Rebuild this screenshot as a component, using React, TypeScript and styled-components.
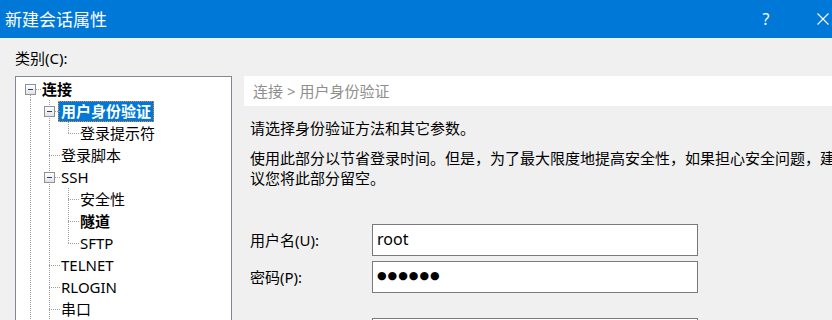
import React from 'react';
import styled, { createGlobalStyle } from 'styled-components';

const GlobalStyle = createGlobalStyle`
  html, body {
    margin: 0;
    padding: 0;
    background: #f0f0f0;
    overflow: hidden;
  }
  body {
    font-family: "Noto Sans", "Noto Sans CJK SC", sans-serif;
    color: #000;
  }
`;

type TreeNode = {
  label: string;
  level: number;
  guides: boolean[];
  first?: boolean;
  last?: boolean;
  expandable?: boolean;
  bold?: boolean;
  selected?: boolean;
};

const nodes: TreeNode[] = [
  { label: '连接', level: 0, guides: [], first: true, expandable: true, bold: true },
  { label: '用户身份验证', level: 1, guides: [true], expandable: true, bold: true, selected: true },
  { label: '登录提示符', level: 2, guides: [true, true], last: true },
  { label: '登录脚本', level: 1, guides: [true] },
  { label: 'SSH', level: 1, guides: [true], expandable: true },
  { label: '安全性', level: 2, guides: [true, true] },
  { label: '隧道', level: 2, guides: [true, true], bold: true },
  { label: 'SFTP', level: 2, guides: [true, true], last: true },
  { label: 'TELNET', level: 1, guides: [true] },
  { label: 'RLOGIN', level: 1, guides: [true] },
  { label: '串口', level: 1, guides: [true] },
];

const App = () => {
  return (
    <Window>
      <GlobalStyle />
      <TitleBar>
        <Title>新建会话属性</Title>
        <TitleButton $help>?</TitleButton>
        <TitleButton>
          <svg width="12" height="12" viewBox="0 0 12 12">
            <path d="M0.5 0.5 L11.5 11.5 M11.5 0.5 L0.5 11.5" stroke="#fff" strokeWidth="1.1" fill="none" />
          </svg>
        </TitleButton>
      </TitleBar>

      <Body>
        <CategoryLabel>类别(C):</CategoryLabel>
        <Content>
          <Tree>
            {nodes.map((node) => (
              <TreeRow key={node.label}>
                {node.guides.map((on, i) => (
                  <Cell key={i}>{on && <VLine $top $bottom />}</Cell>
                ))}
                <Cell>
                  <VLine $top={!node.first} $bottom={!node.last} />
                  <HLine />
                  {node.expandable && (
                    <Expander>
                      <Minus />
                    </Expander>
                  )}
                </Cell>
                <Label $bold={!!node.bold} $selected={!!node.selected}>
                  {node.label}
                </Label>
              </TreeRow>
            ))}
          </Tree>

          <Panel>
            <Breadcrumb>连接 &gt; 用户身份验证</Breadcrumb>
            <PanelBody>
              <Intro>请选择身份验证方法和其它参数。</Intro>
              <Note>
                使用此部分以节省登录时间。但是，为了最大限度地提高安全性，如果担心安全问题，建议您将此部分留空。
              </Note>
              <Form>
                <FieldLabel>用户名(U):</FieldLabel>
                <Field>root</Field>
                <FieldLabel>密码(P):</FieldLabel>
                <Field $password>●●●●●●</Field>
                <FieldLabel />
                <Field $spaced />
              </Form>
            </PanelBody>
          </Panel>
        </Content>
      </Body>
    </Window>
  );
};

const Window = styled.div`
  width: 846px;
  height: 320px;
  overflow: hidden;
  display: flex;
  flex-direction: column;
`;

const TitleBar = styled.div`
  height: 38px;
  flex: 0 0 38px;
  background: #0078d7;
  display: flex;
  align-items: center;
  padding-left: 5px;
  color: #fff;
`;

const Title = styled.div`
  flex: 1;
  font-family: "Noto Sans CJK SC", sans-serif;
  font-size: 17px;
  line-height: 20px;
`;

const TitleButton = styled.div<{ $help?: boolean }>`
  width: 46px;
  height: 38px;
  display: flex;
  align-items: center;
  justify-content: center;
  margin-right: ${(p) => (p.$help ? '11px' : '0')};
  font-family: "Noto Sans", sans-serif;
  font-size: 16px;
`;

const Body = styled.div`
  flex: 1;
  padding: 10px 0 0 15px;
`;

const CategoryLabel = styled.div`
  font-size: 15px;
  line-height: 20px;
`;

const Content = styled.div`
  display: flex;
  gap: 12px;
  margin-top: 8px;
`;

const Tree = styled.div`
  width: 217px;
  height: 300px;
  flex: 0 0 217px;
  background: #fff;
  border: 1px solid #828790;
  padding: 1px 0 0 5px;
  box-sizing: border-box;
  overflow: hidden;
`;

const TreeRow = styled.div`
  display: flex;
  align-items: center;
  height: 22px;
`;

const Cell = styled.span`
  position: relative;
  flex: 0 0 19px;
  height: 22px;
`;

const VLine = styled.span<{ $top: boolean; $bottom: boolean }>`
  position: absolute;
  left: 9px;
  width: 1px;
  top: ${(p) => (p.$top ? '0' : '11px')};
  bottom: ${(p) => (p.$bottom ? '0' : '11px')};
  background-image: linear-gradient(to bottom, #a0a0a0 50%, transparent 50%);
  background-size: 1px 2px;
`;

const HLine = styled.span`
  position: absolute;
  left: 9px;
  right: -1px;
  top: 11px;
  height: 1px;
  background-image: linear-gradient(to right, #a0a0a0 50%, transparent 50%);
  background-size: 2px 1px;
`;

const Expander = styled.span`
  position: absolute;
  left: 4px;
  top: 6px;
  width: 11px;
  height: 11px;
  box-sizing: border-box;
  border: 1px solid #919191;
  background: linear-gradient(to bottom, #ffffff, #e3e3e3);
  display: flex;
  align-items: center;
  justify-content: center;
`;

const Minus = styled.span`
  width: 5px;
  height: 1px;
  background: #1e3f8a;
`;

const Label = styled.span<{ $bold: boolean; $selected: boolean }>`
  margin-left: -1px;
  font-size: 15px;
  line-height: 19px;
  padding: 0 2px;
  white-space: nowrap;
  font-weight: ${(p) => (p.$bold ? 700 : 400)};
  color: ${(p) => (p.$selected ? '#fff' : '#000')};
  background: ${(p) => (p.$selected ? '#0078d7' : 'transparent')};
  border: 1px ${(p) => (p.$selected ? 'dotted #ff8728' : 'solid transparent')};
`;

const Panel = styled.div`
  flex: 1;
  display: flex;
  flex-direction: column;
`;

const Breadcrumb = styled.div`
  height: 30px;
  background: #fff;
  padding-left: 9px;
  font-size: 15px;
  line-height: 30px;
  color: #8e8e8e;
`;

const PanelBody = styled.div`
  padding: 12px 0 0 6px;
  font-size: 15px;
  line-height: 20px;
`;

const Intro = styled.div``;

const Note = styled.div`
  margin-top: 10px;
  width: 590px;
  font-family: "Noto Sans CJK SC", sans-serif;
`;

const Form = styled.div`
  margin-top: 36px;
  display: grid;
  grid-template-columns: 122px 326px;
  row-gap: 5px;
  align-items: center;
`;

const FieldLabel = styled.div`
  font-size: 15px;
  line-height: 20px;
`;

const Field = styled.div<{ $password?: boolean; $spaced?: boolean }>`
  height: 32px;
  box-sizing: border-box;
  border: 1px solid #7a7a7a;
  background: #fff;
  padding-left: 4px;
  margin-top: ${(p) => (p.$spaced ? '20px' : '0')};
  font-family: ${(p) => (p.$password ? '"DejaVu Sans", sans-serif' : '"Noto Sans", sans-serif')};
  font-size: ${(p) => (p.$password ? '11px' : '16px')};
  letter-spacing: ${(p) => (p.$password ? '1px' : '0')};
  line-height: 28px;
`;

export default App;
